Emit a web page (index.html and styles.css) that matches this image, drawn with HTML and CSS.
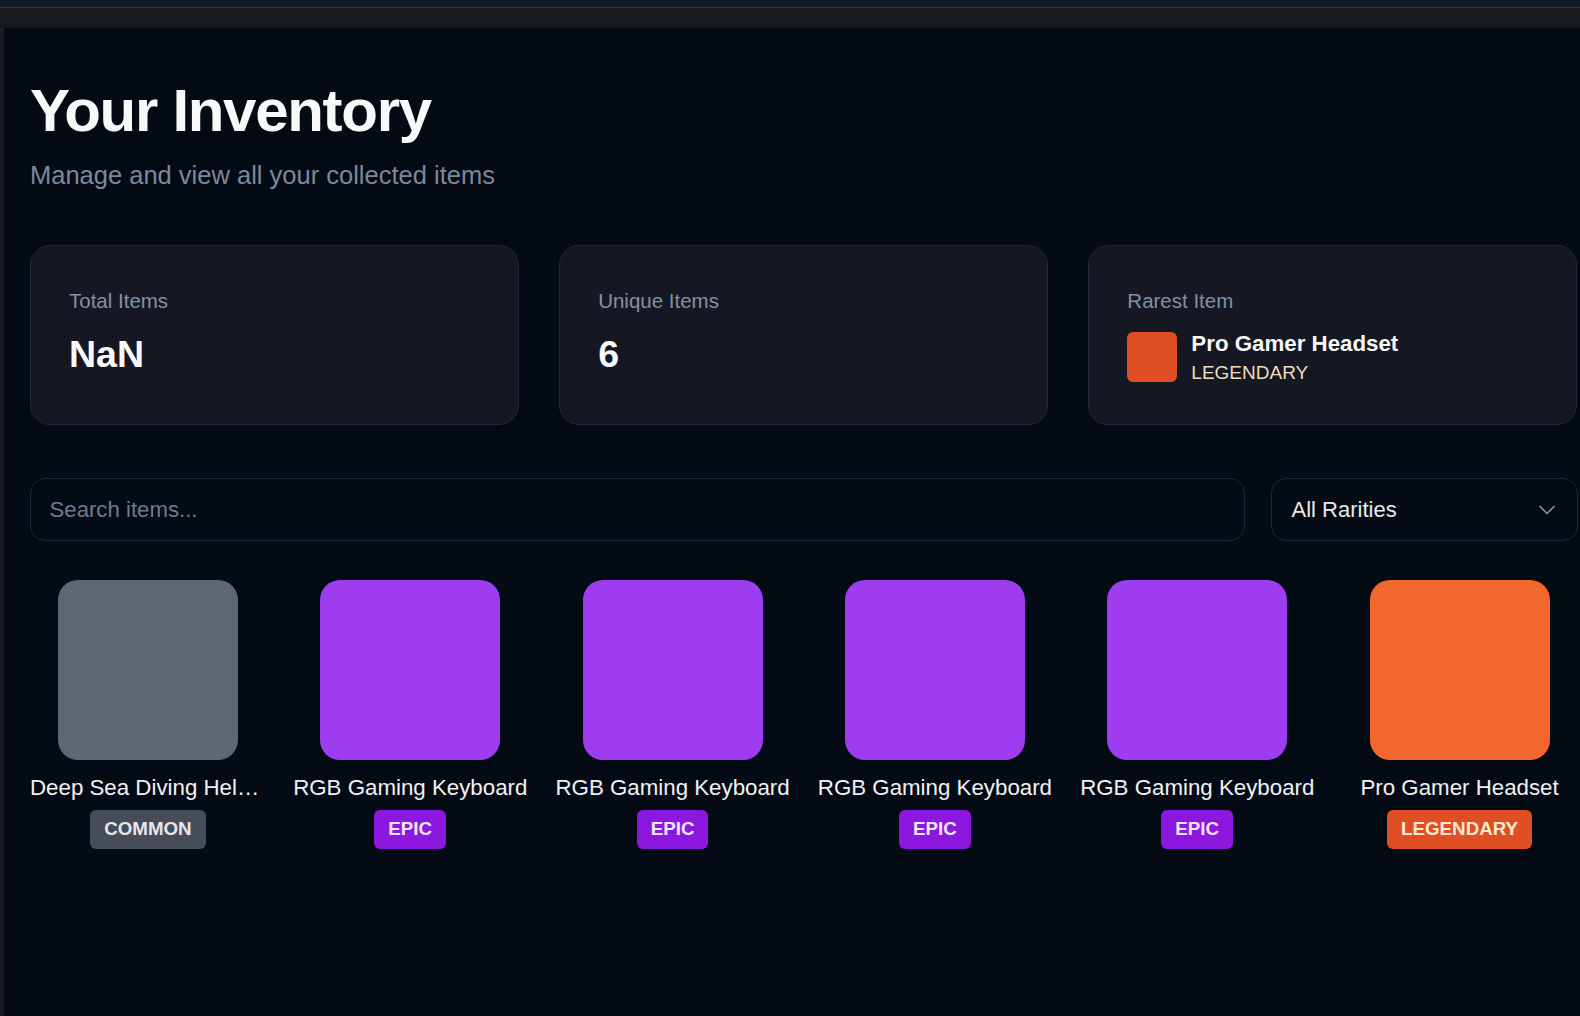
FILE: index.html
```html
<!DOCTYPE html>
<html lang="en">
<head>
<meta charset="utf-8">
<title>Your Inventory</title>
<link rel="stylesheet" href="styles.css">
</head>
<body>
<div class="topbar"></div>
<div class="tabband"></div>
<div class="shell">
  <div class="sidestrip"></div>
  <main class="main">
    <header class="page-head">
      <h1 class="title">Your Inventory</h1>
      <p class="subtitle">Manage and view all your collected items</p>
    </header>

    <section class="stats">
      <div class="stat-card">
        <div class="stat-label">Total Items</div>
        <div class="stat-value">NaN</div>
      </div>
      <div class="stat-card">
        <div class="stat-label">Unique Items</div>
        <div class="stat-value">6</div>
      </div>
      <div class="stat-card">
        <div class="stat-label">Rarest Item</div>
        <div class="rarest">
          <div class="rarest-icon"></div>
          <div class="rarest-text">
            <div class="rarest-name">Pro Gamer Headset</div>
            <div class="rarest-rarity">LEGENDARY</div>
          </div>
        </div>
      </div>
    </section>

    <section class="filters">
      <input class="search" type="text" placeholder="Search items...">
      <div class="select">
        <span class="select-text">All Rarities</span>
        <svg class="chevron" width="16" height="10" viewBox="0 0 16 10" aria-hidden="true">
          <path d="M1 1.5 L8 8.5 L15 1.5" fill="none" stroke="#8a8e98" stroke-width="1.7" stroke-linecap="round" stroke-linejoin="round"/>
        </svg>
      </div>
    </section>

    <section class="items">
      <div class="item">
        <div class="tile tile-common"></div>
        <div class="item-name">Deep Sea Diving Helmet</div>
        <span class="badge badge-common">COMMON</span>
      </div>
      <div class="item">
        <div class="tile tile-epic"></div>
        <div class="item-name">RGB Gaming Keyboard</div>
        <span class="badge badge-epic">EPIC</span>
      </div>
      <div class="item">
        <div class="tile tile-epic"></div>
        <div class="item-name">RGB Gaming Keyboard</div>
        <span class="badge badge-epic">EPIC</span>
      </div>
      <div class="item">
        <div class="tile tile-epic"></div>
        <div class="item-name">RGB Gaming Keyboard</div>
        <span class="badge badge-epic">EPIC</span>
      </div>
      <div class="item">
        <div class="tile tile-epic"></div>
        <div class="item-name">RGB Gaming Keyboard</div>
        <span class="badge badge-epic">EPIC</span>
      </div>
      <div class="item">
        <div class="tile tile-legendary"></div>
        <div class="item-name">Pro Gamer Headset</div>
        <span class="badge badge-legendary">LEGENDARY</span>
      </div>
    </section>
  </main>
</div>
</body>
</html>
```

FILE: styles.css
```css
* {
  box-sizing: border-box;
}

html, body {
  margin: 0;
  padding: 0;
  height: 100%;
}

body {
  background: #050b14;
  font-family: "Liberation Sans", Arial, Helvetica, sans-serif;
  color: #f8f9fb;
  overflow: hidden;
}

.topbar {
  height: 8px;
  background: #151a27;
  border-bottom: 1px solid #2f3441;
}

.tabband {
  height: 20px;
  background: #18191d;
}

.shell {
  display: flex;
  min-height: calc(100% - 28px);
}

.sidestrip {
  width: 4px;
  flex: none;
  background: #1b1d22;
}

.main {
  flex: 1;
  padding: 53px 2.5px 40px 26px;
  min-width: 0;
}

.title {
  margin: 0;
  font-size: 60px;
  line-height: 60px;
  font-weight: 700;
  letter-spacing: -1.3px;
  color: #f8f9fb;
}

.subtitle {
  margin: 17px 0 0;
  font-size: 25.5px;
  line-height: 35px;
  color: #7d889b;
}

.stats {
  margin-top: 52px;
  display: grid;
  grid-template-columns: repeat(3, 1fr);
  gap: 40px;
}

.stat-card {
  background: #151823;
  border: 1px solid #232736;
  border-radius: 20px;
  padding: 40px 38px 38px;
}

.stat-label {
  font-size: 20.5px;
  line-height: 30px;
  color: #8590a3;
}

.stat-value {
  margin-top: 16px;
  font-size: 37.5px;
  line-height: 45px;
  font-weight: 700;
  color: #f8f9fb;
}

.rarest {
  margin-top: 12px;
  display: flex;
  align-items: center;
  gap: 14px;
}

.rarest-icon {
  width: 50px;
  height: 50px;
  border-radius: 6px;
  background: #e04f23;
  flex: none;
}

.rarest-name {
  font-size: 22.3px;
  line-height: 32px;
  font-weight: 700;
  color: #f8f9fb;
}

.rarest-rarity {
  font-size: 19px;
  line-height: 26px;
  color: #f1dcbc;
}

.filters {
  margin-top: 53px;
  display: flex;
  gap: 26px;
}

.search {
  flex: 1;
  min-width: 0;
  height: 63px;
  padding: 0 18.5px;
  background: transparent;
  border: 1px solid #1f2434;
  border-radius: 15px;
  font-family: inherit;
  font-size: 22.2px;
  color: #e8e9ec;
  outline: none;
}

.search::placeholder {
  color: #6f7a8c;
}

.select {
  width: 307px;
  flex: none;
  height: 63px;
  padding: 0 22px 0 20px;
  border: 1px solid #1f2434;
  border-radius: 15px;
  display: flex;
  align-items: center;
  justify-content: space-between;
}

.select-text {
  font-size: 22px;
  color: #e8e9ec;
}

.chevron {
  display: block;
}

.items {
  margin-top: 39px;
  display: grid;
  grid-template-columns: repeat(6, 1fr);
  gap: 26.5px;
}

.item {
  display: flex;
  flex-direction: column;
  align-items: center;
  min-width: 0;
}

.tile {
  width: 180px;
  height: 180px;
  border-radius: 20px;
}

.tile-common {
  background: #5f6572;
}

.tile-epic {
  background: #9e3def;
}

.tile-legendary {
  background: #f2672c;
}

.item-name {
  margin-top: 13px;
  width: 100%;
  text-align: center;
  font-size: 22.3px;
  line-height: 30px;
  color: #f0f1f3;
  white-space: nowrap;
  overflow: hidden;
  text-overflow: ellipsis;
}

.badge {
  margin-top: 7px;
  height: 38.5px;
  line-height: 38.5px;
  padding: 0 14px;
  border-radius: 6px;
  font-size: 18.75px;
  font-weight: 700;
}

.badge-common {
  background: #474c59;
  color: #e6e7ea;
}

.badge-epic {
  background: #8c17df;
  color: #f1e4fd;
}

.badge-legendary {
  background: #e04f23;
  color: #fde8d2;
}
```
